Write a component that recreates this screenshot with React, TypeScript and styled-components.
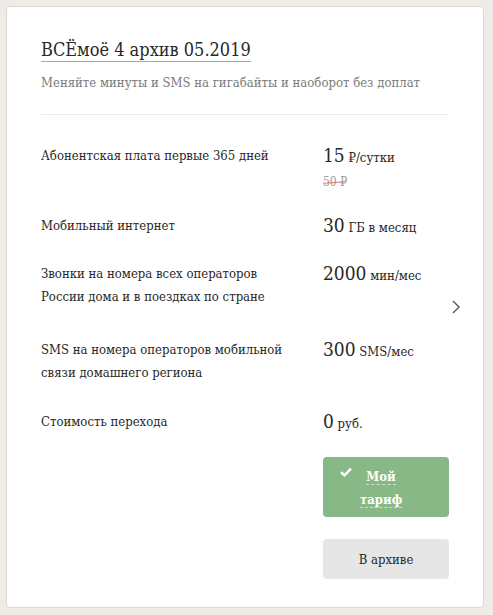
import React from "react";
import styled, { createGlobalStyle } from "styled-components";

const Global = createGlobalStyle`
  html, body { margin: 0; padding: 0; background: #efebe7; }
  body { font-family: "DejaVu Serif Condensed", "DejaVu Serif", "Liberation Serif", serif; }
`;

const Page = styled.div`
  padding: 6px 9px 8px 6px;
`;

const Card = styled.div`
  position: relative;
  background: #fff;
  border: 1px solid #dcd8d4;
  border-radius: 4px;
  box-sizing: border-box;
  height: 602px;
  padding: 31px 34px 0 34px;
`;

const Title = styled.h1`
  margin: 0;
  display: inline-block;
  font-size: 18px;
  line-height: 23px;
  font-weight: normal;
  color: #282828;
  border-bottom: 1px solid #a8a8a8;
  padding-bottom: 0;
`;

const Subtitle = styled.p`
  margin: 12px 0 0 0;
  font-size: 13px;
  line-height: 18px;
  color: #7a7a7a;
`;

const Divider = styled.div`
  height: 1px;
  background: #ebebeb;
  margin: 22px 0 0 0;
  width: 408px;
`;

const Rows = styled.div`
  display: flex;
  flex-direction: column;
  padding-top: 28px;
`;

const Row = styled.div<{ $h: number }>`
  display: grid;
  grid-template-columns: 282px 1fr;
  min-height: ${(p) => p.$h}px;
  align-items: start;
`;

const Label = styled.div`
  font-size: 13px;
  line-height: 23px;
  color: #282828;
  padding-top: 1px;
`;

const Value = styled.div`
  color: #282828;
  font-size: 13px;
  line-height: 24px;
`;

const Big = styled.span`
  font-size: 19px;
`;

const Old = styled.div`
  margin-top: 4px;
  font-size: 12px;
  line-height: 16px;
  color: #9a9a9a;
  display: inline-block;
  position: relative;
  &::after {
    content: "";
    position: absolute;
    left: 0;
    right: 0;
    top: 8px;
    height: 1px;
    background: #e07878;
    transform: rotate(-4deg);
  }
`;

const Chevron = styled.svg`
  position: absolute;
  right: 22px;
  top: 292px;
`;

const Buttons = styled.div`
  display: flex;
  flex-direction: column;
  gap: 22px;
  margin-left: 282px;
  margin-top: 18px;
  width: 126px;
`;

const GreenButton = styled.div`
  height: 60px;
  border-radius: 4px;
  background: #87b886;
  color: #fff;
  display: flex;
  align-items: center;
  justify-content: flex-start;
  gap: 8px;
  box-sizing: border-box;
  padding: 0 0 0 17px;
  font-size: 13px;
  font-weight: bold;
`;

const Check = styled.svg`
  align-self: flex-start;
  margin-top: 10px;
  flex-shrink: 0;
`;

const MyText = styled.div`
  text-align: center;
  line-height: 23px;
  width: 42px;
  padding-top: 1px;
  span {
    border-bottom: 1px dashed rgba(255, 255, 255, 0.6);
  }
`;

const GreyButton = styled.div`
  height: 40px;
  border-radius: 4px;
  background: #e6e6e6;
  color: #282828;
  display: flex;
  align-items: center;
  justify-content: center;
  font-size: 13px;
`;

export default function App() {
  return (
    <>
      <Global />
      <Page>
        <Card>
          <Title>ВСЁмоё 4 архив 05.2019</Title>
          <Subtitle>Меняйте минуты и SMS на гигабайты и наоборот без доплат</Subtitle>
          <Divider />
          <Rows>
            <Row $h={70}>
              <Label>Абонентская плата первые 365 дней</Label>
              <Value>
                <div>
                  <Big>15</Big> ₽/сутки
                </div>
                <Old>50 ₽</Old>
              </Value>
            </Row>
            <Row $h={48}>
              <Label>Мобильный интернет</Label>
              <Value>
                <Big>30</Big> ГБ в месяц
              </Value>
            </Row>
            <Row $h={76}>
              <Label>
                Звонки на номера всех операторов
                <br />
                России дома и в поездках по стране
              </Label>
              <Value>
                <Big>2000</Big> мин/мес
              </Value>
            </Row>
            <Row $h={72}>
              <Label>
                SMS на номера операторов мобильной
                <br />
                связи домашнего региона
              </Label>
              <Value>
                <Big>300</Big> SMS/мес
              </Value>
            </Row>
            <Row $h={30}>
              <Label>Стоимость перехода</Label>
              <Value>
                <Big>0</Big> руб.
              </Value>
            </Row>
          </Rows>
          <Buttons>
            <GreenButton>
              <Check width="12" height="10" viewBox="0 0 12 10">
                <path d="M1 5.2 L4.4 8.4 L11 1.6" stroke="#fff" strokeWidth="2.4" fill="none" />
              </Check>
              <MyText>
                <span>Мой</span>
                <br />
                <span>тариф</span>
              </MyText>
            </GreenButton>
            <GreyButton>В архиве</GreyButton>
          </Buttons>
          <Chevron width="10" height="16" viewBox="0 0 10 16">
            <path d="M2 2 L8 8 L2 14" stroke="#555" strokeWidth="1.4" fill="none" />
          </Chevron>
        </Card>
      </Page>
    </>
  );
}
